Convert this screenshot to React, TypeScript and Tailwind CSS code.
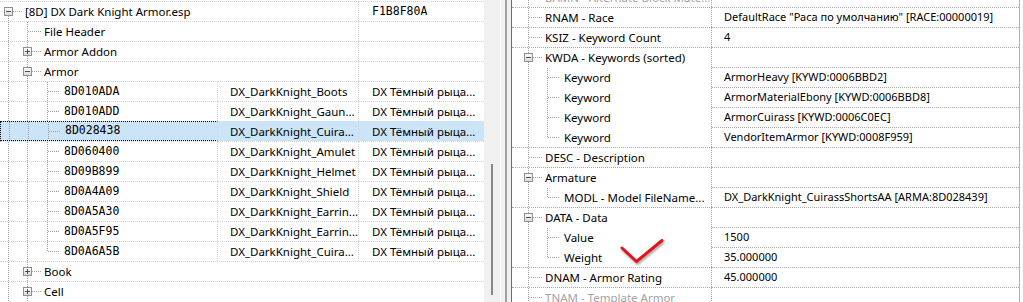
import React from "react";

type Vert = [number, "full" | "top" | "bottom"];
type Lines = { verts: Vert[]; h?: [number, number]; box?: [number, "+" | "-"] };

const dot = "#a0a0a0";

const Box = ({ p, kind }: { p: number; kind: "+" | "-" }) => (
  <g>
    <rect x={p - 3.5} y={5.5} width={8} height={8} fill="url(#boxfill)" stroke="#8f8f8f" />
    <line x1={p - 2} x2={p + 3} y1={9.5} y2={9.5} stroke="#33507f" />
    {kind === "+" && <line x1={p + 0.5} x2={p + 0.5} y1={7} y2={12} stroke="#33507f" />}
  </g>
);

const Gutter = ({ w, lines }: { w: number; lines: Lines }) => (
  <svg width={w} height={19} className="block shrink-0">
    {lines.verts.map(([x, m], i) => (
      <line
        key={i}
        x1={x + 0.5}
        x2={x + 0.5}
        y1={m === "bottom" ? 10 : 0}
        y2={m === "top" ? 10 : 19}
        stroke={dot}
        strokeDasharray="1 1"
      />
    ))}
    {lines.h && (
      <line x1={lines.h[0]} x2={lines.h[1]} y1={9.5} y2={9.5} stroke={dot} strokeDasharray="1 1" />
    )}
    {lines.box && <Box p={lines.box[0]} kind={lines.box[1]} />}
  </svg>
);

type LeftRow = {
  level: number;
  text: string;
  mono?: boolean;
  c2?: string;
  c3?: string;
  box?: "+" | "-";
  last?: boolean;
  sel?: boolean;
  split?: boolean;
};

const armor: [string, string][] = [
  ["8D010ADA", "DX_DarkKnight_Boots"],
  ["8D010ADD", "DX_DarkKnight_Gaun..."],
  ["8D028438", "DX_DarkKnight_Cuira..."],
  ["8D060400", "DX_DarkKnight_Amulet"],
  ["8D09B899", "DX_DarkKnight_Helmet"],
  ["8D0A4A09", "DX_DarkKnight_Shield"],
  ["8D0A5A30", "DX_DarkKnight_Earrin..."],
  ["8D0A5F95", "DX_DarkKnight_Earrin..."],
  ["8D0A6A5B", "DX_DarkKnight_Cuira..."],
];

const leftRows: LeftRow[] = [
  { level: 0, text: "[8D] DX Dark Knight Armor.esp", c3: "F1B8F80A", box: "-", split: true },
  { level: 1, text: "File Header", split: true },
  { level: 1, text: "Armor Addon", box: "+", split: true },
  { level: 1, text: "Armor", box: "-", split: true },
  ...armor.map(([id, name], i) => ({
    level: 2,
    text: id,
    mono: true,
    c2: name,
    c3: "DX Тёмный рыца...",
    last: i === armor.length - 1,
    sel: id === "8D028438",
  })),
  { level: 1, text: "Book", box: "+" },
  { level: 1, text: "Cell", box: "+" },
];

function leftLines(r: LeftRow): Lines {
  if (r.level === 0) return { verts: [[8, "bottom"]], h: [13, 22], box: [8, "-"] };
  if (r.level === 1)
    return {
      verts: [[8, "full"], [27, "full"]],
      h: r.box ? [32, 42] : [28, 42],
      box: r.box ? [27, r.box] : undefined,
    };
  return { verts: [[8, "full"], [27, "full"], [47, r.last ? "top" : "full"]], h: [48, 60] };
}

const gutterW = [25, 44, 64];
const mono = "font-['DejaVu_Sans_Mono',monospace] text-[11.5px]";

const LRow = ({ r }: { r: LeftRow }) => {
  const grid = "border-t border-dotted border-[#d4d4d4]";
  const hasCols = !!r.c2;
  return (
    <div className={`flex h-[20px] ${r.sel ? "bg-[#cce4f7]" : ""}`}>
      <div
        className={`flex items-center overflow-hidden whitespace-nowrap ${
          hasCols
            ? "w-[218px] border-r border-dotted border-r-[#d4d4d4]"
            : r.split
              ? "w-[359px] border-r border-dotted border-r-[#d4d4d4]"
              : "flex-1"
        } ${r.sel ? "border border-dotted border-black" : grid}`}
      >
        <Gutter w={gutterW[r.level]} lines={leftLines(r)} />
        <span className={r.mono ? mono : "text-[11.5px]"}>{r.text}</span>
      </div>
      {hasCols && (
        <div
          className={`flex w-[141px] items-center whitespace-nowrap border-r border-dotted border-r-[#d4d4d4] pl-[12px] text-[11.5px] ${
            r.sel ? "border-t border-t-transparent" : grid
          }`}
        >
          {r.c2}
        </div>
      )}
      {(hasCols || r.split) && (
        <div
          className={`flex flex-1 items-center whitespace-nowrap pl-[13px] ${
            r.sel ? "border-t border-t-transparent" : grid
          } ${hasCols ? "text-[11.5px]" : mono}`}
        >
          {r.c3}
        </div>
      )}
    </div>
  );
};

type RightRow = {
  level: number;
  text: string;
  value?: string;
  box?: "+" | "-";
  last?: boolean;
  gray?: boolean;
};

const rightRows: RightRow[] = [
  { level: 0, text: "BAMN - Alternate Block Mate...", gray: true },
  { level: 0, text: "RNAM - Race", value: 'DefaultRace "Раса по умолчанию" [RACE:00000019]' },
  { level: 0, text: "KSIZ - Keyword Count", value: "4" },
  { level: 0, text: "KWDA - Keywords (sorted)", box: "-" },
  { level: 1, text: "Keyword", value: "ArmorHeavy [KYWD:0006BBD2]" },
  { level: 1, text: "Keyword", value: "ArmorMaterialEbony [KYWD:0006BBD8]" },
  { level: 1, text: "Keyword", value: "ArmorCuirass [KYWD:0006C0EC]" },
  { level: 1, text: "Keyword", value: "VendorItemArmor [KYWD:0008F959]", last: true },
  { level: 0, text: "DESC - Description" },
  { level: 0, text: "Armature", box: "-" },
  {
    level: 1,
    text: "MODL - Model FileName...",
    value: "DX_DarkKnight_CuirassShortsAA [ARMA:8D028439]",
    last: true,
  },
  { level: 0, text: "DATA - Data", box: "-" },
  { level: 1, text: "Value", value: "1500" },
  { level: 1, text: "Weight", value: "35.000000", last: true },
  { level: 0, text: "DNAM - Armor Rating", value: "45.000000" },
  { level: 0, text: "TNAM - Template Armor", gray: true },
];

function rightLines(r: RightRow): Lines {
  if (r.level === 0)
    return {
      verts: [[16, "full"]],
      h: r.box ? [21, 30] : [17, 30],
      box: r.box ? [16, r.box] : undefined,
    };
  return { verts: [[16, "full"], [35, r.last ? "top" : "full"]], h: [36, 48] };
}

const RRow = ({ r }: { r: RightRow }) => (
  <div className={`flex h-[20px] ${r.gray ? "text-[#a3a3a3]" : "text-black"}`}>
    <div
      className={`flex w-[200px] items-center overflow-hidden whitespace-nowrap border-r border-t border-dotted border-r-[#a8a8a8] text-[11.5px] ${
        r.level === 0 ? "border-t-[#a8a8a8]" : "border-t-transparent"
      }`}
    >
      <Gutter w={r.level === 0 ? 33 : 52} lines={rightLines(r)} />
      <span>{r.text}</span>
    </div>
    <div className="flex flex-1 items-center whitespace-nowrap border-t border-dotted border-t-[#a8a8a8] pl-[12px] text-[11px]">
      {r.value}
    </div>
  </div>
);

export default function App() {
  return (
    <div className="flex h-[302px] w-[1023px] overflow-hidden bg-white font-['Noto_Sans',sans-serif] text-[11.5px] text-black">
      <svg width={0} height={0} className="absolute">
        <defs>
          <linearGradient id="boxfill" x1="0" y1="0" x2="0" y2="1">
            <stop offset="0" stopColor="#ffffff" />
            <stop offset="1" stopColor="#d9d9d9" />
          </linearGradient>
        </defs>
      </svg>

      <div className="w-[484px] shrink-0 pt-[1px]">
        {leftRows.map((r, i) => (
          <LRow key={i} r={r} />
        ))}
      </div>

      <div className="w-[16px] shrink-0 bg-[#f0f0f0] pl-[7px] pt-[164px]">
        <div className="h-[131px] w-[2px] bg-[#868686]" />
      </div>

      <div className="flex w-[12px] shrink-0">
        <div className="w-[1px] bg-white" />
        <div className="w-[4px] bg-[#f0f0f0]" />
        <div className="w-[2px] bg-[#a0a0a0]" />
        <div className="w-[4px] bg-[#f0f0f0]" />
        <div className="w-[1px] bg-[#6e6e6e]" />
      </div>

      <div className="relative flex-1">
        <div className="-mt-[13px] w-[508px] border-r border-[#b4b4b4]">
          {rightRows.map((r, i) => (
            <RRow key={i} r={r} />
          ))}
        </div>
        <svg
          className="pointer-events-none absolute inset-0 drop-shadow-[1px_2px_1px_rgba(0,0,0,0.35)]"
          width={511}
          height={302}
        >
          <path
            d="M110 248 L124.5 261.5 L150 240.5"
            fill="none"
            stroke="#e3141b"
            strokeWidth={3}
            strokeLinecap="round"
            strokeLinejoin="round"
          />
        </svg>
      </div>
    </div>
  );
}
